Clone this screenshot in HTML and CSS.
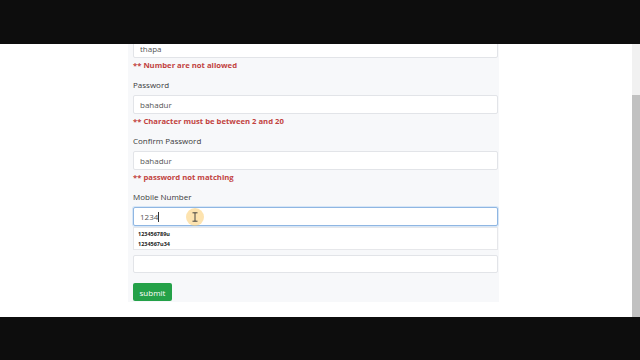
FILE: index.html
```html
<!DOCTYPE html>
<html>
<head>
  <meta charset="UTF-8">
  <title>Form validation</title>
  <link rel="stylesheet" href="styles.css">
</head>
<body>
  <div class="blackbar top"></div>
  <div class="screen">
    <div class="page">
      <form class="form">
        <input class="input" type="text" value="thapa">
        <p class="err">** Number are not allowed</p>

        <label class="lbl">Password</label>
        <input class="input" type="text" value="bahadur">
        <p class="err">** Character must be between 2 and 20</p>

        <label class="lbl">Confirm Password</label>
        <input class="input" type="text" value="bahadur">
        <p class="err">** password not matching</p>

        <label class="lbl">Mobile Number</label>
        <div class="mobile">
          <div class="input focus">1234<span class="caret"></span></div>
          <div class="hilite">
            <svg width="8" height="10" viewBox="0 0 8 10">
              <path d="M1.5 0.8h5M1.5 9.2h5M4 0.8v8.4" stroke="#333" stroke-width="0.9" fill="none"/>
            </svg>
          </div>
          <ul class="suggest">
            <li>123456789u</li>
            <li>1234567u34</li>
          </ul>
        </div>

        <input class="input after" type="text" value="">
        <button class="submit" type="button">submit</button>
      </form>
    </div>
    <div class="scrollbar">
      <div class="thumb"></div>
    </div>
  </div>
  <div class="blackbar bottom"></div>
</body>
</html>
```

FILE: styles.css
```css
*{
  margin:0;
  padding:0;
  box-sizing:border-box;
}
body{
  background:#0d0d0d;
  height:360px;
  overflow:hidden;
  display:flex;
  flex-direction:column;
  font-family:"Open Sans", "Noto Sans", sans-serif;
}
.blackbar.top{
  height:44px;
}
.blackbar.bottom{
  flex:1;
}
.screen{
  height:273px;
  background:#fff;
  display:flex;
  overflow:hidden;
}
.page{
  flex:1;
  padding-left:128px;
}
.form{
  width:371px;
  margin-top:-5px;
  padding:0 1px 1px 5px;
  background:#f7f8fa;
  display:flex;
  flex-direction:column;
}
.input{
  display:block;
  width:100%;
  height:19px;
  padding:0 6px;
  border:1px solid #e2e4e8;
  border-radius:2px;
  background:#fff;
  font-family:inherit;
  font-size:8px;
  line-height:17px;
  color:#555;
  outline:none;
}
.input.focus{
  border-color:#8fb6e2;
  box-shadow:0 0 0 1px #d6e6f7;
}
.caret{
  display:inline-block;
  width:1px;
  height:10px;
  background:#333;
  vertical-align:-2px;
}
.err{
  margin-top:1px;
  height:12px;
  font-size:7.7px;
  line-height:12px;
  font-weight:700;
  color:#c2433f;
}
.lbl{
  margin-top:8px;
  margin-bottom:4px;
  height:12px;
  font-size:8px;
  line-height:12px;
  color:#3a3a3a;
}
.mobile{
  position:relative;
}
.hilite{
  position:absolute;
  left:53px;
  top:1px;
  width:18px;
  height:18px;
  border-radius:50%;
  background:rgba(252,204,110,0.55);
  display:flex;
  align-items:center;
  justify-content:center;
}
.suggest{
  position:absolute;
  left:0;
  right:0;
  top:20px;
  height:23px;
  padding:1px 4px;
  list-style:none;
  background:#fff;
  border:1px solid #e6e7ea;
  font-size:5.5px;
  font-weight:700;
  line-height:10px;
  color:#222;
}
.input.after{
  margin-top:29px;
  height:18px;
}
.submit{
  margin-top:10px;
  width:39px;
  height:18px;
  border:none;
  border-radius:2px;
  background:#24a148;
  color:#fff;
  font-family:inherit;
  font-size:8px;
}
.scrollbar{
  width:8px;
  background:#f1f1f1;
  display:flex;
  flex-direction:column;
  padding-top:51px;
}
.thumb{
  flex:1;
  background:#c1c1c1;
}
```
